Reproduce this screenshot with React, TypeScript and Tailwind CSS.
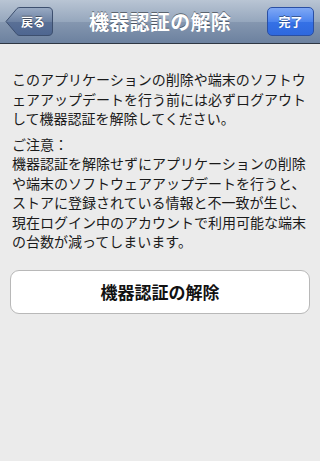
import React from "react";

const FONT = { fontFamily: '"Noto Sans CJK JP", "Noto Sans", sans-serif' };

function BackButton() {
  return (
    <button className="relative flex h-[29px] w-[48px] items-center justify-center pl-[8px]">
      <svg className="absolute inset-0" width="48" height="29" viewBox="0 0 48 29">
        <defs>
          <linearGradient id="bk" x1="0" y1="0" x2="0" y2="1">
            <stop offset="0" stopColor="#9aabc4" />
            <stop offset="0.5" stopColor="#6d82a3" />
            <stop offset="0.51" stopColor="#5a7096" />
            <stop offset="1" stopColor="#4e6690" />
          </linearGradient>
        </defs>
        <path
          d="M1 14.5 L12 1.5 Q13 0.5 15 0.5 L43 0.5 Q47.5 0.5 47.5 5 L47.5 24 Q47.5 28.5 43 28.5 L15 28.5 Q13 28.5 12 27.5 Z"
          fill="url(#bk)"
          stroke="#3d4f6e"
        />
      </svg>
      <span className="relative text-[12px] font-bold text-white [text-shadow:0_-1px_0_rgba(0,0,0,0.45)]">
        戻る
      </span>
    </button>
  );
}

function DoneButton() {
  return (
    <button className="flex h-[29px] w-[47px] items-center justify-center rounded-[5px] border border-[#2a4fa3] bg-[linear-gradient(#7fa8f5_0%,#4c84ee_50%,#3571e6_51%,#2e68de_100%)]">
      <span className="text-[12px] font-bold text-white [text-shadow:0_-1px_0_rgba(0,0,0,0.4)]">
        完了
      </span>
    </button>
  );
}

export default function App() {
  return (
    <div className="flex h-[461px] w-[320px] flex-col bg-[#ebebeb]" style={FONT}>
      <div className="flex h-[44px] shrink-0 items-center justify-between border-b border-[#2d3642] bg-[linear-gradient(#b9c5d4_0%,#96a7bd_50%,#8597b0_51%,#6c819f_100%)] pl-[5px] pr-[6px]">
        <BackButton />
        <h1 className="text-[20px] font-bold tracking-[0.3px] text-white [text-shadow:0_-1px_0_rgba(0,0,0,0.45)]">
          機器認証の解除
        </h1>
        <DoneButton />
      </div>

      <div className="px-[12px] pt-[26px] text-[14px] leading-[19.5px] text-[#1a1a1a]">
        <p>
          このアプリケーションの削除や端末のソフトウェアアップデートを行う前には必ずログアウトして機器認証を解除してください。
        </p>
        <p className="mt-[6px]">
          ご注意：
          <br />
          機器認証を解除せずにアプリケーションの削除や端末のソフトウェアアップデートを行うと、ストアに登録されている情報と不一致が生じ、現在ログイン中のアカウントで利用可能な端末の台数が減ってしまいます。
        </p>
      </div>

      <div className="px-[10px] pt-[18px]">
        <button className="flex h-[44px] w-full items-center justify-center rounded-[9px] border-[1.5px] border-[#b8b8b8] bg-white text-[17px] font-bold text-[#111]">
          機器認証の解除
        </button>
      </div>
    </div>
  );
}
